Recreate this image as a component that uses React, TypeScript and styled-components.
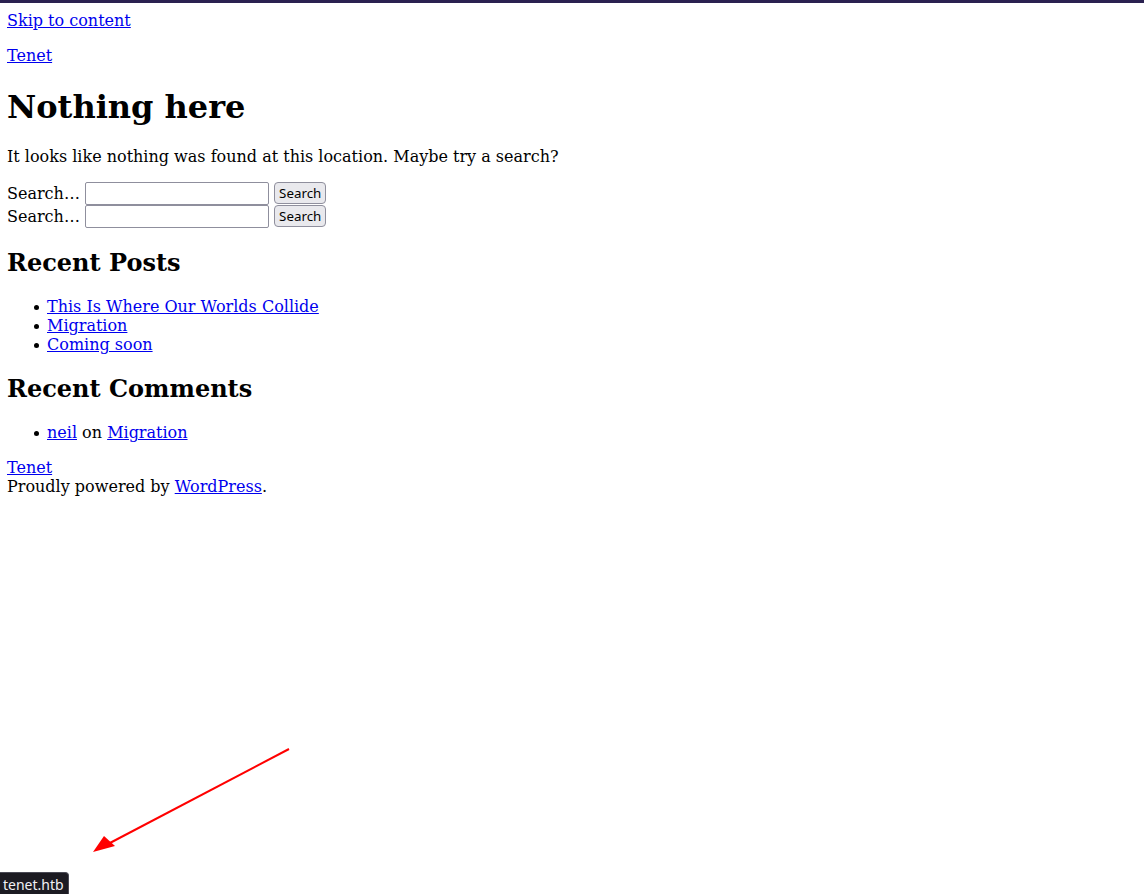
import React from "react";
import styled, { createGlobalStyle } from "styled-components";

const GlobalStyle = createGlobalStyle`
  html, body { margin: 0; padding: 0; background: #ffffff; }
  body {
    font-family: "DejaVu Serif", serif;
    font-size: 16px;
    color: #000000;
  }
  a { color: #0000ee; text-decoration: underline; }
`;

const TopBar = styled.div`
  height: 3px;
  background: #2a2150;
`;

const Page = styled.div`
  padding: 8px 8px 8px 7px;
`;

const SkipLine = styled.div``;

const SiteTitle = styled.p`
  margin: 16px 0;
`;

const Title = styled.h1`
  font-size: 32px;
  font-weight: bold;
  margin: 23.44px 0 20.44px;
`;

const Para = styled.p`
  margin: 16px 0;
`;

const SearchArea = styled.div``;

const SearchForm = styled.form`
  display: block;
  margin: 0;
`;

const SearchInput = styled.input`
  box-sizing: border-box;
  width: 184px;
  height: 23px;
  border: 1px solid #8f8f9d;
  border-radius: 2px;
  background: #ffffff;
  padding: 2px 3px;
  font-family: "Noto Sans", sans-serif;
  font-size: 13.33px;
  vertical-align: baseline;
`;

const SearchButton = styled.button`
  box-sizing: border-box;
  height: 22px;
  padding: 0 4px;
  border: 1px solid #8f8f9d;
  border-radius: 4px;
  background: #e9e9ed;
  color: #000000;
  font-family: "Noto Sans", sans-serif;
  font-size: 13.33px;
`;

const WidgetTitle = styled.h2`
  font-size: 24px;
  font-weight: bold;
  margin: 19.92px 0;
`;

const List = styled.ul`
  margin: 16px 0;
  padding-left: 40px;
  list-style: none;
`;

const Item = styled.li`
  position: relative;
  &::before {
    content: "";
    position: absolute;
    left: -13px;
    top: 8px;
    width: 5px;
    height: 5px;
    border-radius: 50%;
    background: #000000;
  }
`;

const Footer = styled.footer`
  margin-top: 16px;
`;

const Arrow = styled.svg`
  position: absolute;
  left: 0;
  top: 0;
  pointer-events: none;
`;

const StatusTip = styled.div`
  position: fixed;
  left: 0;
  bottom: 0;
  padding: 3px 4px 1px 3px;
  background: #1c1b22;
  color: #f0f0f4;
  border: 1px solid #4a4a55;
  border-left: none;
  border-bottom: none;
  border-top-right-radius: 4px;
  font-family: "Noto Sans", sans-serif;
  font-size: 14px;
  line-height: 17px;
`;

function Search() {
  return (
    <SearchForm onSubmit={(e) => e.preventDefault()}>
      <label>Search…</label> <SearchInput type="search" />{" "}
      <SearchButton type="submit">Search</SearchButton>
    </SearchForm>
  );
}

export default function App() {
  return (
    <>
      <GlobalStyle />
      <TopBar />
      <Page>
        <SkipLine>
          <a href="#content">Skip to content</a>
        </SkipLine>
        <SiteTitle>
          <a href="#">Tenet</a>
        </SiteTitle>
        <Title>Nothing here</Title>
        <Para>It looks like nothing was found at this location. Maybe try a search?</Para>
        <SearchArea>
          <Search />
          <Search />
        </SearchArea>
        <WidgetTitle>Recent Posts</WidgetTitle>
        <List>
          <Item><a href="#">This Is Where Our Worlds Collide</a></Item>
          <Item><a href="#">Migration</a></Item>
          <Item><a href="#">Coming soon</a></Item>
        </List>
        <WidgetTitle>Recent Comments</WidgetTitle>
        <List>
          <Item><a href="#">neil</a> on <a href="#">Migration</a></Item>
        </List>
        <Footer>
          <a href="#">Tenet</a>
          <br />
          Proudly powered by <a href="#">WordPress</a>.
        </Footer>
      </Page>
      <Arrow width="1144" height="894" viewBox="0 0 1144 894">
        <line x1="289" y1="749" x2="108" y2="844" stroke="#ff0000" strokeWidth="2" />
        <polygon points="93,852 104,836 115,846" fill="#ff0000" />
      </Arrow>
      <StatusTip>tenet.htb</StatusTip>
    </>
  );
}
